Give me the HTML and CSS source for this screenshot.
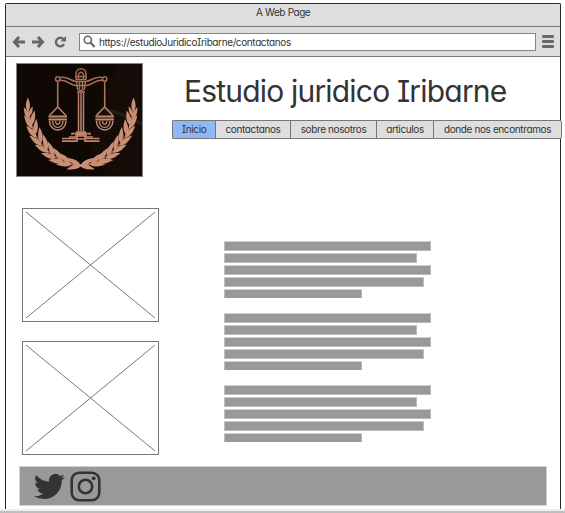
FILE: index.html
```html
<!DOCTYPE html>
<html lang="es">
<head>
<meta charset="utf-8">
<title>A Web Page</title>
<link rel="stylesheet" href="styles.css">
</head>
<body>
<svg class="defs" aria-hidden="true">
  <defs>
    <linearGradient id="copper" x1="0" y1="0" x2="0" y2="113" gradientUnits="userSpaceOnUse">
      <stop offset="0" stop-color="#9c624d"/><stop offset=".5" stop-color="#c18a70"/><stop offset="1" stop-color="#b9795d"/>
    </linearGradient>
    <path id="leaf" d="M0 1C-3.200-3-3-7.500 0-15C3.200-8 3-3 0 1Z"/>
    <g id="branch" fill="#c88f74">
      <path d="M66 103C40 101 15 80 12 46" fill="none" stroke="#a86c54" stroke-width="1.200"/>
      <use href="#leaf" transform="translate(65 102) rotate(-106)"/>
      <use href="#leaf" transform="translate(64 102) rotate(-62)"/>
      <use href="#leaf" transform="translate(55 101) rotate(-92)"/>
      <use href="#leaf" transform="translate(54 100) rotate(-48)"/>
      <use href="#leaf" transform="translate(47 99) rotate(-82)"/>
      <use href="#leaf" transform="translate(46 97) rotate(-36)"/>
      <use href="#leaf" transform="translate(39 95) rotate(-71)"/>
      <use href="#leaf" transform="translate(38 92) rotate(-25)"/>
      <use href="#leaf" transform="translate(32 89) rotate(-61)"/>
      <use href="#leaf" transform="translate(31 86) rotate(-15)"/>
      <use href="#leaf" transform="translate(25 82) rotate(-51)"/>
      <use href="#leaf" transform="translate(25 79) rotate(-6)"/>
      <use href="#leaf" transform="translate(20 74) rotate(-41)"/>
      <use href="#leaf" transform="translate(19 71) rotate(5)"/>
      <use href="#leaf" transform="translate(16 65) rotate(-32)"/>
      <use href="#leaf" transform="translate(15 62) rotate(14)"/>
      <use href="#leaf" transform="translate(13 56) rotate(-24) scale(.85)"/>
      <use href="#leaf" transform="translate(13 53) rotate(20) scale(.7)"/>
      <use href="#leaf" transform="translate(12 48) rotate(-1) scale(.9)"/>
    </g>
    <g id="pan" fill="none" stroke="url(#copper)">
      <circle cx="41.700" cy="16" r="2.200" stroke-width="1.500"/>
      <path d="M41.700 18V44L33.500 52.500M41.700 44L50 52.500" stroke-width="1.500"/>
      <path d="M32.500 53.500H51M32.500 56.500H51" stroke-width="2"/>
      <path d="M33.500 58C34 70 49.500 70 50 58" stroke-width="1.500"/>
      <path d="M36.500 58C37 66.500 46.500 66.500 47 58" stroke-width="1.300"/>
      <path d="M39.500 58C40 62.500 43.500 62.500 44 58" stroke-width="1.300"/>
    </g>
  </defs>
</svg>
<div class="browser">
  <header class="titlebar">A Web Page</header>
  <div class="toolbar">
    <svg class="nav-icons" viewBox="0 0 60 16">
      <g fill="none" stroke="#666" stroke-width="3">
        <path d="M7 3L2.500 8L7 13M3 8H13"/>
        <path d="M26 3L30.500 8L26 13M20 8H30"/>
        <path d="M51.500 5.300A4.300 4.300 0 1 0 52 10.200" stroke-width="2.400"/>
      </g>
      <path d="M54 2V7.500H48.500Z" fill="#666"/>
    </svg>
    <div class="address">
      <svg class="search" viewBox="0 0 14 14"><circle cx="5.200" cy="5.200" r="3.900" fill="none" stroke="#666" stroke-width="1.700"/><path d="M8 8L12.500 13" stroke="#666" stroke-width="2.400"/></svg>
      <span>https://estudioJuridicoIribarne/contactanos</span>
    </div>
    <div class="menu"><i></i><i></i><i></i></div>
  </div>
  <main class="page">
    <div class="top">
      <svg class="logo" viewBox="0 0 127 114">
        <rect width="127" height="114" fill="#100805"/>
        <path d="M105 0C88 26 77 57 76 83C80 98 92 109 105 114H127V0Z" fill="#150c08"/>
        <path d="M88 46C107 51 117 56 127 62" fill="none" stroke="#231e15" stroke-width="3"/>
        <use href="#branch"/><use href="#branch" transform="translate(129.400 0) scale(-1 1)"/>
        <use href="#pan"/><use href="#pan" transform="translate(130.400 0) scale(-1 1)"/>
        <g fill="none" stroke="url(#copper)">
          <path d="M60 16V11C60 4 70 4 70 11V16" stroke-width="1.500"/>
          <path d="M62.500 16V11Q65 7.500 67.500 11V16" stroke-width="1.300"/>
          <path d="M59.500 13.500H70.500M59.500 16.500H70.500" stroke-width="1.600"/>
          <path d="M44 14.500C51 13 55 18 60 18.500H70C75 18 79 13 86 14.500M44 17.500C51 16 54 23 60 22.500H70C76 23 79 16 86 17.500" stroke-width="1.500"/>
          <path d="M60.500 18L61.500 26Q65 29 68.500 26L69.500 18M63.500 19V26M66.500 19V26" stroke-width="1.400"/>
          <path d="M61 29H69" stroke-width="1.600"/>
          <path d="M62.500 30V68M65 30V68M67.500 30V68" stroke-width="1.500"/>
          <path d="M60 69H70M56 72V70.500H74V72M53 74H60V72H70V74H77" stroke-width="1.600"/>
          <path d="M46 75.500H61V73H69V75.500H83.500M46 78.200H61V76H69V78.200H83.500" stroke-width="1.700"/>
        </g>
        <rect x=".5" y=".5" width="126" height="113" fill="none" stroke="#858585"/>
      </svg>
      <div class="heading">
        <h1>Estudio juridico Iribarne</h1>
        <nav class="tabs">
          <a class="tab tab-home active">Inicio</a>
          <a class="tab tab-contact">contactanos</a>
          <a class="tab tab-about">sobre nosotros</a>
          <a class="tab tab-articles">articulos</a>
          <a class="tab tab-location">donde nos encontramos</a>
        </nav>
      </div>
    </div>
    <div class="content">
      <div class="images">
        <svg class="placeholder" viewBox="0 0 137 114"><rect x=".5" y=".5" width="136" height="113"/><path d="M4 4L133 110M133 4L4 110"/></svg>
        <svg class="placeholder" viewBox="0 0 137 114"><rect x=".5" y=".5" width="136" height="113"/><path d="M4 4L133 110M133 4L4 110"/></svg>
      </div>
      <div class="text">
        <div class="paragraph"><i></i><i></i><i></i><i></i><i></i></div>
        <div class="paragraph"><i></i><i></i><i></i><i></i><i></i></div>
        <div class="paragraph"><i></i><i></i><i></i><i></i><i></i></div>
      </div>
    </div>
    <footer class="footer">
      <svg class="social" viewBox="0 0 24 24"><path d="M23.950 4.570a10 10 0 0 1-2.820.770 4.960 4.960 0 0 0 2.160-2.720c-.950.550-2 .950-3.130 1.180a4.920 4.920 0 0 0-8.380 4.480C7.690 8.090 4.070 6.130 1.640 3.160a4.920 4.920 0 0 0 1.520 6.570 4.900 4.900 0 0 1-2.230-.610v.060a4.920 4.920 0 0 0 3.950 4.830 5 5 0 0 1-2.210.080 4.940 4.940 0 0 0 4.600 3.420A9.870 9.870 0 0 1 0 19.540a13.990 13.990 0 0 0 7.550 2.210c9.050 0 14-7.500 14-13.980 0-.210 0-.420-.020-.630a9.940 9.940 0 0 0 2.420-2.570z"/></svg>
      <svg class="social" viewBox="0 0 31 31"><g fill="none" stroke="#333" stroke-width="2.600"><rect x="1.700" y="1.700" width="27.600" height="27.600" rx="7.500"/><circle cx="15.500" cy="15.500" r="6.700"/></g><circle cx="23.700" cy="7.300" r="1.900"/></svg>
    </footer>
  </main>
</div>
<div class="bottom-edge"></div>
</body>
</html>
```
FILE: styles.css
```css
* { box-sizing: border-box; }
body {
  margin: 0;
  width: 565px;
  height: 513px;
  padding-top: 3px;
  overflow: hidden;
  background: #fff;
  color: #333;
  font: 10px/12px Inter, "Open Sans", sans-serif;
  font-feature-settings: "cv08", "cv11";
}
.defs { position: absolute; width: 0; height: 0; }
svg { display: block; flex: none; }
.browser {
  width: 556px;
  height: 506px;
  margin-left: 5px;
  border: solid #29292d;
  border-width: 1px 1px 0;
  border-radius: 2px 2px 0 0;
}
.titlebar {
  height: 23px;
  padding: 2px 0 0;
  background: #dededd;
  border-bottom: 1px solid #777;
  text-align: center;
  letter-spacing: -.5px;
  word-spacing: .5px;
}
.toolbar {
  display: flex;
  align-items: center;
  height: 30px;
  padding-left: 6px;
  background: #dededd;
  border-bottom: 1px solid #777;
}
.nav-icons { width: 60px; height: 16px; }
.address {
  display: flex;
  align-items: center;
  gap: 3px;
  width: 457px;
  height: 18px;
  margin-left: 7px;
  padding-left: 3px;
  background: #fff;
  border: 1px solid #858585;
  letter-spacing: -.38px;
}
.search { width: 13px; height: 13px; }
.menu { display: grid; gap: 2px; width: 12px; margin-left: 6px; }
.menu i { height: 3px; background: #686868; border-radius: 1px; }
.top { display: flex; padding: 6px 0 0 10px; }
.logo { width: 127px; height: 114px; }
.heading { margin-left: 29px; }
h1 {
  margin: 8px 0 0 12px;
  font-size: 30px;
  line-height: 40px;
  font-weight: 400;
  letter-spacing: -.81px;
  white-space: nowrap;
}
.tabs { display: flex; width: 390px; margin-top: 9px; }
.tab {
  flex: none;
  height: 19px;
  line-height: 17px;
  border: 1px solid #777;
  border-right-width: 0;
  background: #dedede;
  text-align: center;
  white-space: nowrap;
  letter-spacing: -.38px;
}
.tab.active { background: #91b8f2; border-radius: 2px 0 0 2px; }
.tab-home { width: 43px; }
.tab-contact { width: 75px; }
.tab-about { width: 86px; }
.tab-articles { width: 57px; }
.tab-location { width: 129px; border-right-width: 1px; border-radius: 0 2px 2px 0; }
.content { display: flex; margin-top: 31px; padding-left: 16px; }
.images { display: grid; gap: 19px; }
.placeholder { width: 137px; height: 114px; fill: none; stroke: #777; stroke-width: 1; }
.text { display: grid; align-content: start; gap: 15px; margin: 33px 0 0 65px; }
.paragraph { display: grid; gap: 2px; width: 207px; }
.paragraph i { height: 10px; background: #999; border: 1px solid #bbb; border-top-color: #ccc; }
.paragraph i:last-child { height: 9px; width: 138px; border-bottom-color: #999; }
.paragraph i:nth-child(2) { width: 193px; }
.paragraph i:nth-child(4) { width: 200px; }
.footer {
  display: flex;
  align-items: center;
  gap: 5px;
  width: 528px;
  height: 40px;
  margin: 11px 0 0 13px;
  padding-left: 14px;
  background: #999;
  border: 1px solid #d0d0d0;
}
.social { width: 31px; height: 31px; fill: #333; }
.bottom-edge { height: 4px; background: #bebebe; border-top: 2px solid #eee; }
```
